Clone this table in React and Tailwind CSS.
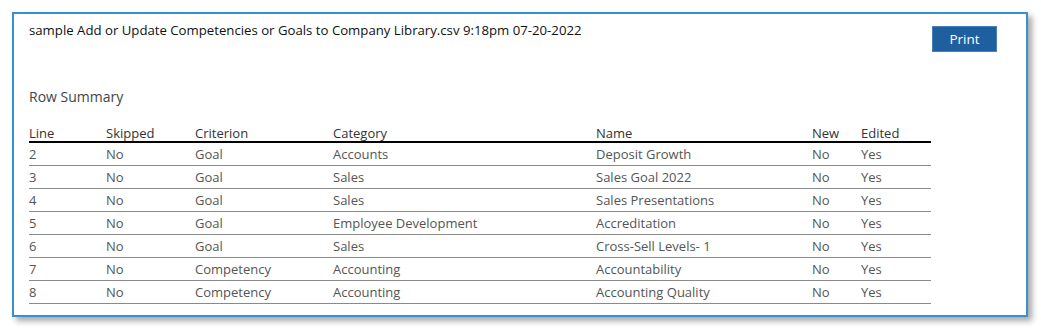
const rows = [
  ['2', 'No', 'Goal', 'Accounts', 'Deposit Growth', 'No', 'Yes'],
  ['3', 'No', 'Goal', 'Sales', 'Sales Goal 2022', 'No', 'Yes'],
  ['4', 'No', 'Goal', 'Sales', 'Sales Presentations', 'No', 'Yes'],
  ['5', 'No', 'Goal', 'Employee Development', 'Accreditation', 'No', 'Yes'],
  ['6', 'No', 'Goal', 'Sales', 'Cross-Sell Levels- 1', 'No', 'Yes'],
  ['7', 'No', 'Competency', 'Accounting', 'Accountability', 'No', 'Yes'],
  ['8', 'No', 'Competency', 'Accounting', 'Accounting Quality', 'No', 'Yes'],
]

const cols = [
  { label: 'Line', w: 'w-[77px]' },
  { label: 'Skipped', w: 'w-[89px]' },
  { label: 'Criterion', w: 'w-[138px]' },
  { label: 'Category', w: 'w-[263px]' },
  { label: 'Name', w: 'w-[216px]' },
  { label: 'New', w: 'w-[49px]' },
  { label: 'Edited', w: 'w-[70px]' },
]

export default function App() {
  return (
    <div className="w-[1041px] h-[331px] bg-white pt-[12px] pl-[12px] font-['Open_Sans',sans-serif]">
      <div className="w-[1016px] h-[305px] border-2 border-[#3b8fd0] bg-white shadow-[4px_4px_6px_rgba(0,0,0,0.35)] pl-[15px] pr-[29px] pt-[7px]">
        {/* Header */}
        <div className="flex items-start justify-between">
          <div className="text-[13.2px] leading-[18px] text-[#111]">
            sample Add or Update Competencies or Goals to Company Library.csv 9:18pm 07-20-2022
          </div>
          <button className="mt-[5px] w-[65px] h-[26px] bg-[#1f5fa0] border border-[#4a7fb8] text-white text-[13.5px]">
            Print
          </button>
        </div>

        <div className="mt-[35px] text-[14px] leading-[20px] text-[#444]">Row Summary</div>

        {/* Table */}
        <table className="mt-[17px] w-[902px] table-fixed border-collapse text-[13px]">
          <thead>
            <tr className="border-b-2 border-black">
              {cols.map(c => (
                <th key={c.label} className={`${c.w} p-0 pt-[2px] h-[17px] leading-[15px] text-left font-normal text-[#333]`}>
                  {c.label}
                </th>
              ))}
            </tr>
          </thead>
          <tbody>
            {rows.map(r => (
              <tr key={r[0]} className="border-b border-[#8a8a8a]">
                {r.map((cell, i) => (
                  <td key={i} className="p-0 h-[22px] leading-[22px] text-[#555]">{cell}</td>
                ))}
              </tr>
            ))}
          </tbody>
        </table>
      </div>
    </div>
  )
}
